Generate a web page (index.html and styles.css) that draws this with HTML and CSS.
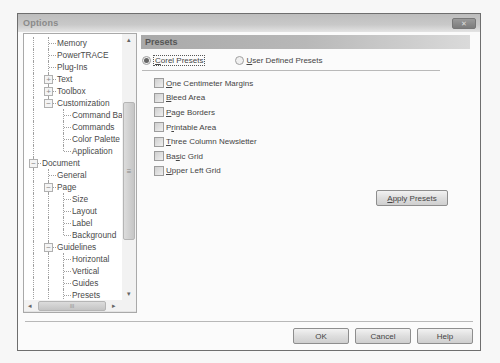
FILE: index.html
```html
<!DOCTYPE html>
<html lang="en">
<head>
    <meta charset="UTF-8">
    <title>Options</title>
    <link rel="stylesheet" href="styles.css">
</head>
<body>
    <div class="dialog">
        <div class="titlebar">
            <span class="title">Options</span>
            <span class="close-btn">&#x2715;</span>
        </div>

        <div class="content">
            <!-- left tree -->
            <div class="tree">
                <div class="tree-main">
                    <div class="tree-rows">
                        <div class="row"><span class="g v"></span><span class="g tee"></span><span class="lbl">Memory</span></div>
                        <div class="row"><span class="g v"></span><span class="g tee"></span><span class="lbl">PowerTRACE</span></div>
                        <div class="row"><span class="g v"></span><span class="g tee"></span><span class="lbl">Plug-Ins</span></div>
                        <div class="row"><span class="g v"></span><span class="g tee"><i class="box">+</i></span><span class="lbl">Text</span></div>
                        <div class="row"><span class="g v"></span><span class="g tee"><i class="box">+</i></span><span class="lbl">Toolbox</span></div>
                        <div class="row"><span class="g v"></span><span class="g ell"><i class="box">&minus;</i></span><span class="lbl">Customization</span></div>
                        <div class="row"><span class="g v"></span><span class="g"></span><span class="g tee"></span><span class="lbl">Command Bars</span></div>
                        <div class="row"><span class="g v"></span><span class="g"></span><span class="g tee"></span><span class="lbl">Commands</span></div>
                        <div class="row"><span class="g v"></span><span class="g"></span><span class="g tee"></span><span class="lbl">Color Palette</span></div>
                        <div class="row"><span class="g v"></span><span class="g"></span><span class="g ell"></span><span class="lbl">Application</span></div>
                        <div class="row"><span class="g tee"><i class="box">&minus;</i></span><span class="lbl">Document</span></div>
                        <div class="row"><span class="g v"></span><span class="g tee"></span><span class="lbl">General</span></div>
                        <div class="row"><span class="g v"></span><span class="g tee"><i class="box">&minus;</i></span><span class="lbl">Page</span></div>
                        <div class="row"><span class="g v"></span><span class="g v"></span><span class="g tee"></span><span class="lbl">Size</span></div>
                        <div class="row"><span class="g v"></span><span class="g v"></span><span class="g tee"></span><span class="lbl">Layout</span></div>
                        <div class="row"><span class="g v"></span><span class="g v"></span><span class="g tee"></span><span class="lbl">Label</span></div>
                        <div class="row"><span class="g v"></span><span class="g v"></span><span class="g ell"></span><span class="lbl">Background</span></div>
                        <div class="row"><span class="g v"></span><span class="g tee"><i class="box">&minus;</i></span><span class="lbl">Guidelines</span></div>
                        <div class="row"><span class="g v"></span><span class="g v"></span><span class="g tee"></span><span class="lbl">Horizontal</span></div>
                        <div class="row"><span class="g v"></span><span class="g v"></span><span class="g tee"></span><span class="lbl">Vertical</span></div>
                        <div class="row"><span class="g v"></span><span class="g v"></span><span class="g tee"></span><span class="lbl">Guides</span></div>
                        <div class="row"><span class="g v"></span><span class="g v"></span><span class="g tee"></span><span class="lbl">Presets</span></div>
                        <div class="row"><span class="g v"></span><span class="g v"></span><span class="g v"></span></div>
                    </div>
                    <div class="vscroll">
                        <span class="arrow">&#9652;</span>
                        <div class="vtrack">
                            <div class="vthumb"><span class="grip">&equiv;</span></div>
                        </div>
                        <span class="arrow">&#9662;</span>
                    </div>
                </div>
                <div class="hscroll">
                    <span class="arrow">&#9666;</span>
                    <div class="hthumb"><span class="grip">III</span></div>
                    <span class="arrow">&#9656;</span>
                </div>
            </div>

            <!-- right panel -->
            <div class="panel">
                <div class="panel-header">Presets</div>

                <div class="radios">
                    <label class="radio checked"><span class="dot"></span><span class="focus"><u>C</u>orel Presets</span></label>
                    <label class="radio"><span class="dot"></span><span><u>U</u>ser Defined Presets</span></label>
                </div>

                <div class="checks">
                    <label class="check"><span class="cbox"></span><span><u>O</u>ne Centimeter Margins</span></label>
                    <label class="check"><span class="cbox"></span><span><u>B</u>leed Area</span></label>
                    <label class="check"><span class="cbox"></span><span><u>P</u>age Borders</span></label>
                    <label class="check"><span class="cbox"></span><span>P<u>r</u>intable Area</span></label>
                    <label class="check"><span class="cbox"></span><span><u>T</u>hree Column Newsletter</span></label>
                    <label class="check"><span class="cbox"></span><span>Ba<u>s</u>ic Grid</span></label>
                    <label class="check"><span class="cbox"></span><span><u>U</u>pper Left Grid</span></label>
                </div>

                <div class="apply-row">
                    <button class="btn apply"><u>A</u>pply Presets</button>
                </div>
            </div>
        </div>

        <div class="footer">
            <button class="btn">OK</button>
            <button class="btn">Cancel</button>
            <button class="btn">Help</button>
        </div>
    </div>
</body>
</html>
```

FILE: styles.css
```css
/* Options dialog */
body {
    margin: 0;
    padding: 13px 0 0 17px;
    background: #f7f7f7;
    font-family: "Liberation Sans", Arial, sans-serif;
    font-size: 8px;
    color: #444;
}

.dialog {
    width: 462px;
    height: 336px;
    border: 1px solid #6e6e6e;
    background: #fbfbfb;
    display: flex;
    flex-direction: column;
}

.titlebar {
    height: 18px;
    display: flex;
    align-items: center;
    justify-content: space-between;
    padding: 0 4px 0 5px;
    background: linear-gradient(to bottom, #bdbdbd, #c9c9c9 60%, #e4e4e4);
}

.title {
    color: #8a8a8a;
    font-size: 9px;
    font-weight: bold;
    letter-spacing: 0.2px;
}

.close-btn {
    width: 22px;
    height: 9px;
    background: linear-gradient(to bottom, #9a9a9a, #7c7c7c);
    border: 1px solid #777;
    border-radius: 2px;
    color: #ddd;
    font-size: 7px;
    line-height: 9px;
    text-align: center;
}

.content {
    display: flex;
    padding: 1px 10px 0 5px;
    height: 281px;
}

/* tree */
.tree {
    width: 112px;
    height: 278px;
    border: 1px solid #a9a9a9;
    background: #fff;
    display: flex;
    flex-direction: column;
}

.tree-main {
    flex: 1;
    display: flex;
    overflow: hidden;
}

.tree-rows {
    flex: 1;
    padding: 3px 0 0 2px;
    overflow: hidden;
}

.row {
    height: 12px;
    display: flex;
    align-items: center;
    white-space: nowrap;
    font-size: 8.3px;
    color: #4a4a4a;
}

.g {
    width: 15px;
    height: 12px;
    flex: none;
    position: relative;
}

.g.v::before,
.g.tee::before,
.g.ell::before {
    content: "";
    position: absolute;
    left: 7px;
    top: 0;
    bottom: 0;
    border-left: 1px dotted #a0a0a0;
}

.g.ell::before {
    bottom: 6px;
}

.g.tee::after,
.g.ell::after {
    content: "";
    position: absolute;
    left: 8px;
    right: 0;
    top: 6px;
    border-top: 1px dotted #a0a0a0;
}

.box {
    position: absolute;
    left: 3px;
    top: 2px;
    width: 7px;
    height: 7px;
    border: 1px solid #b0b0b0;
    background: #f4f4f4;
    font-style: normal;
    font-size: 8px;
    line-height: 7px;
    text-align: center;
    color: #888;
    z-index: 1;
}

.lbl {
    padding-left: 1px;
}

.vscroll {
    width: 14px;
    display: flex;
    flex-direction: column;
    align-items: center;
    background: #f2f2f2;
}

.arrow {
    height: 12px;
    font-size: 7px;
    line-height: 12px;
    color: #666;
}

.vtrack {
    flex: 1;
    width: 100%;
    padding-top: 56px;
}

.vthumb {
    height: 136px;
    margin: 0 1px;
    border: 1px solid #b5b5b5;
    border-radius: 2px;
    background: linear-gradient(to right, #dcdcdc, #c6c6c6);
    display: flex;
    align-items: center;
    justify-content: center;
}

.grip {
    font-size: 8px;
    color: #888;
}

.hscroll {
    height: 11px;
    display: flex;
    align-items: center;
    gap: 6px;
    padding: 0 4px;
    background: #f2f2f2;
    border-bottom: 1px solid #e4e4e4;
}

.hthumb {
    width: 66px;
    height: 8px;
    border: 1px solid #b5b5b5;
    border-radius: 2px;
    background: linear-gradient(to bottom, #dcdcdc, #c4c4c4);
    display: flex;
    align-items: center;
    justify-content: center;
}

.hthumb .grip {
    font-size: 5px;
    line-height: 6px;
}

/* right panel */
.panel {
    flex: 1;
    margin: 2px 0 0 4px;
    display: flex;
    flex-direction: column;
}

.panel-header {
    height: 14px;
    padding-left: 4px;
    line-height: 14px;
    font-weight: bold;
    font-size: 9px;
    color: #555;
    background: linear-gradient(to right, #a9a9a9, #b8b8b8 50%, #dadada);
}

.radios {
    display: flex;
    gap: 30px;
    align-items: center;
    height: 18px;
    margin: 2px 30px 0 1px;
    border-bottom: 1px solid #b9b9b9;
    padding-bottom: 1px;
}

.radio {
    display: flex;
    align-items: center;
    gap: 2px;
}

.dot {
    width: 7px;
    height: 7px;
    border: 1px solid #a0a0a0;
    border-radius: 50%;
    background: #f0f0f0;
    position: relative;
}

.radio.checked .dot::after {
    content: "";
    position: absolute;
    left: 1px;
    top: 1px;
    width: 5px;
    height: 5px;
    border-radius: 50%;
    background: #666;
}

.focus {
    border: 1px dotted #555;
    padding: 0 1px;
}

.checks {
    display: flex;
    flex-direction: column;
    padding: 5px 0 0 13px;
}

.check {
    height: 14.6px;
    display: flex;
    align-items: center;
    gap: 2px;
}

.cbox {
    width: 8px;
    height: 8px;
    border: 1px solid #9c9c9c;
    background: linear-gradient(135deg, #cfcfcf, #efefef);
}

.apply-row {
    display: flex;
    justify-content: flex-end;
    padding: 12px 22px 0 0;
}

.btn {
    width: 56px;
    height: 16px;
    padding: 0;
    border: 1px solid #8e8e8e;
    border-radius: 2px;
    background: linear-gradient(to bottom, #f2f2f2, #dedede 50%, #cfcfcf);
    font-family: "Liberation Sans", Arial, sans-serif;
    font-size: 8px;
    color: #444;
}

.btn.apply {
    width: 72px;
}

.footer {
    margin: 7px 7px 0 7px;
    border-top: 1px solid #b8b8b8;
    padding-top: 6px;
    display: flex;
    justify-content: flex-end;
    gap: 6px;
}
```
